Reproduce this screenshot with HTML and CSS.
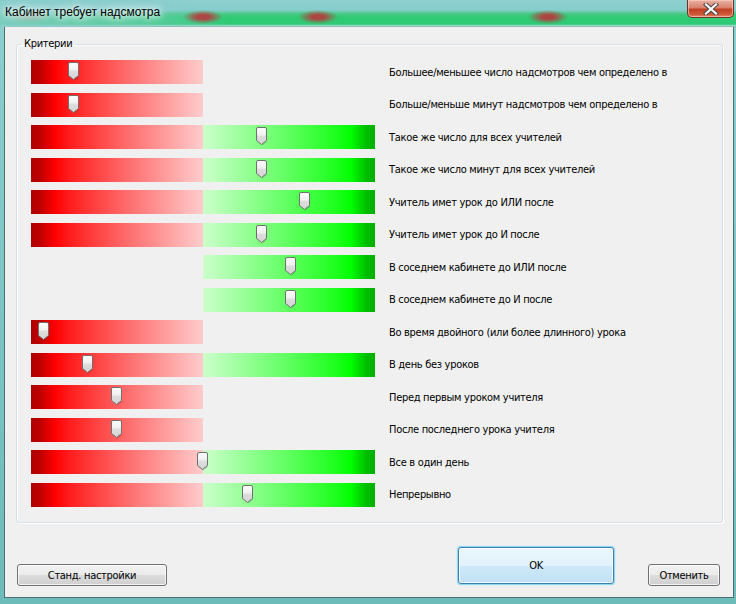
FILE: index.html
```html
<!DOCTYPE html>
<html lang="ru">
<head>
    <meta charset="UTF-8">
    <title>Кабинет требует надсмотра</title>
    <link rel="stylesheet" href="styles.css">
</head>
<body>
    <div class="window">
        <div class="titlebar">
            <span class="title">Кабинет требует надсмотра</span>
            <div class="close_btn">
                <svg width="16" height="12" viewBox="0 0 16 12">
                    <path d="M3 1.5 L13 10.5 M13 1.5 L3 10.5" stroke="#474747" stroke-width="4.2" stroke-linecap="square"/>
                    <path d="M3 1.5 L13 10.5 M13 1.5 L3 10.5" stroke="#ffffff" stroke-width="2.2" stroke-linecap="square"/>
                </svg>
            </div>
        </div>
        <div class="client">
            <fieldset class="group">
                <legend>Критерии</legend>
                <div class="rows">
                    <div class="row">
                        <div class="track"><div class="bar red"></div><div class="bar"></div><span class="thumb" style="left:37px"></span></div>
                        <span class="label">Большее/меньшее число надсмотров чем определено в</span>
                    </div>
                    <div class="row">
                        <div class="track"><div class="bar red"></div><div class="bar"></div><span class="thumb" style="left:37px"></span></div>
                        <span class="label">Больше/меньше минут надсмотров чем определено в</span>
                    </div>
                    <div class="row">
                        <div class="track"><div class="bar red"></div><div class="bar green"></div><span class="thumb" style="left:225px"></span></div>
                        <span class="label">Такое же число для всех учителей</span>
                    </div>
                    <div class="row">
                        <div class="track"><div class="bar red"></div><div class="bar green"></div><span class="thumb" style="left:225px"></span></div>
                        <span class="label">Такое же число минут для всех учителей</span>
                    </div>
                    <div class="row">
                        <div class="track"><div class="bar red"></div><div class="bar green"></div><span class="thumb" style="left:268px"></span></div>
                        <span class="label">Учитель имет урок до ИЛИ после</span>
                    </div>
                    <div class="row">
                        <div class="track"><div class="bar red"></div><div class="bar green"></div><span class="thumb" style="left:225px"></span></div>
                        <span class="label">Учитель имет урок до И после</span>
                    </div>
                    <div class="row">
                        <div class="track"><div class="bar"></div><div class="bar green"></div><span class="thumb" style="left:254px"></span></div>
                        <span class="label">В соседнем кабинете до ИЛИ после</span>
                    </div>
                    <div class="row">
                        <div class="track"><div class="bar"></div><div class="bar green"></div><span class="thumb" style="left:254px"></span></div>
                        <span class="label">В соседнем кабинете до И после</span>
                    </div>
                    <div class="row">
                        <div class="track"><div class="bar red"></div><div class="bar"></div><span class="thumb" style="left:7px"></span></div>
                        <span class="label">Во время двойного (или более длинного) урока</span>
                    </div>
                    <div class="row">
                        <div class="track"><div class="bar red"></div><div class="bar green"></div><span class="thumb" style="left:51px"></span></div>
                        <span class="label">В день без уроков</span>
                    </div>
                    <div class="row">
                        <div class="track"><div class="bar red"></div><div class="bar"></div><span class="thumb" style="left:80px"></span></div>
                        <span class="label">Перед первым уроком учителя</span>
                    </div>
                    <div class="row">
                        <div class="track"><div class="bar red"></div><div class="bar"></div><span class="thumb" style="left:80px"></span></div>
                        <span class="label">После последнего урока учителя</span>
                    </div>
                    <div class="row">
                        <div class="track"><div class="bar red"></div><div class="bar green"></div><span class="thumb" style="left:166px"></span></div>
                        <span class="label">Все в один день</span>
                    </div>
                    <div class="row">
                        <div class="track"><div class="bar red"></div><div class="bar green"></div><span class="thumb" style="left:211px"></span></div>
                        <span class="label">Непрерывно</span>
                    </div>
                </div>
            </fieldset>
            <div class="buttons">
                <button class="btn btn_defaults">Станд. настройки</button>
                <button class="btn btn_ok">OK</button>
                <button class="btn btn_cancel">Отменить</button>
            </div>
        </div>
    </div>
</body>
</html>
```

FILE: styles.css
```css
body {
    margin: 0;
    font-family: "DejaVu Sans Condensed", "DejaVu Sans", sans-serif;
    font-size: 11px;
    letter-spacing: -0.3px;
    color: #000;
}

.window {
    width: 736px;
    height: 604px;
    box-sizing: border-box;
    padding: 0 2px 6px 4px;
    display: flex;
    flex-direction: column;
    background: linear-gradient(to bottom, #8ccfce, #78c4c2 60%, #6cbcba);
}

/* glass title bar, blurred desktop behind it */
.titlebar {
    flex: 0 0 27px;
    margin: 0 -2px 0 -4px;
    display: flex;
    align-items: flex-start;
    background-color: #86cdcb;
    background-image:
        radial-gradient(ellipse 20px 7px at 203px 17px, rgba(185, 55, 60, 0.9) 30%, rgba(185, 55, 60, 0) 100%),
        radial-gradient(ellipse 20px 7px at 318px 17px, rgba(185, 55, 60, 0.9) 30%, rgba(185, 55, 60, 0) 100%),
        radial-gradient(ellipse 20px 7px at 548px 17px, rgba(185, 55, 60, 0.9) 30%, rgba(185, 55, 60, 0) 100%),
        radial-gradient(ellipse 22px 7px at 30px 16px, rgba(190, 90, 90, 0.3), rgba(190, 90, 90, 0) 100%),
        linear-gradient(to right, rgba(134, 205, 203, 0.85) 0, rgba(134, 205, 203, 0.35) 170px, rgba(134, 205, 203, 0) 230px),
        linear-gradient(to bottom, #8fd1d0 0, #86cdcb 10px, #45c882 14px, #2dcb72 18px, #30c977 24px, #5ccf95 25px, #c4ebe6 26px, #5a8a8a 27px);
}

.title {
    padding: 4px 0 0 5px;
    font-family: "Liberation Sans", sans-serif;
    font-size: 12px;
    letter-spacing: 0;
    line-height: 16px;
    color: #000;
    text-shadow: 0 0 5px #eefaf8, 0 0 9px #eefaf8, 0 0 12px #eefaf8;
}

.close_btn {
    margin-left: auto;
    margin-right: 2px;
    width: 47px;
    height: 18px;
    box-sizing: border-box;
    border: 1px solid #6b3328;
    border-top: none;
    border-radius: 0 0 5px 5px;
    display: flex;
    align-items: center;
    justify-content: center;
    background: linear-gradient(to bottom, #e9b1a3 0, #d9826d 45%, #c23f25 55%, #cf5a3a 85%, #e08a6c 100%);
    box-shadow: inset 0 0 0 1px rgba(255, 210, 200, 0.6);
}

.client {
    flex: 1;
    display: flex;
    flex-direction: column;
    background-color: #f0f0f0;
    border: 1px solid #4d6f72;
    border-top: none;
}

.group {
    margin: 10px 10px 0 11px;
    padding: 9px 14px 15px 14px;
    border: 1px solid #d5dfe5;
    border-radius: 3px;
    box-shadow: inset 1px 1px 0 #fff, 1px 1px 0 #fff;
}

.group legend {
    margin-left: -10px;
    padding: 0 3px;
    line-height: 14px;
}

.rows {
    display: flex;
    flex-direction: column;
    gap: 8.5px;
}

.row {
    display: flex;
    align-items: center;
    height: 24px;
}

.track {
    position: relative;
    display: flex;
    width: 344px;
    height: 24px;
}

.bar {
    width: 172px;
    height: 24px;
}

.bar.red {
    background: linear-gradient(to right, #b00000 0, #bd0000 5%, #ff0000 14%, #ff1c1c 22%, #ff6a6a 55%, #ffcccc 100%);
}

.bar.green {
    background: linear-gradient(to right, #ccffcc 0, #6aff6a 45%, #1cff1c 78%, #00ff00 86%, #00bd00 95%, #00b000 100%);
}

.thumb {
    position: absolute;
    top: 2px;
    width: 11px;
    height: 19px;
    background: url("data:image/svg+xml,%3Csvg xmlns='http://www.w3.org/2000/svg' width='11' height='19' viewBox='0 0 11 19'%3E%3Cdefs%3E%3ClinearGradient id='g' x1='0' y1='0' x2='0' y2='1'%3E%3Cstop offset='0' stop-color='%23fdfdfd'/%3E%3Cstop offset='0.45' stop-color='%23f0f0f0'/%3E%3Cstop offset='0.5' stop-color='%23dedede'/%3E%3Cstop offset='1' stop-color='%23d4d4d4'/%3E%3C/linearGradient%3E%3C/defs%3E%3Cpath d='M2 0.5H9Q10.5 0.5 10.5 2V13.5L5.5 17.5L0.5 13.5V2Q0.5 0.5 2 0.5Z' fill='url(%23g)' stroke='%23707070'/%3E%3Cpath d='M6 18.3L10.8 14.4' stroke='%23000' stroke-opacity='0.18'/%3E%3C/svg%3E") no-repeat;
}

.label {
    margin-left: 14px;
    white-space: nowrap;
}

.buttons {
    margin-top: auto;
    padding: 0 0 11px 0;
    display: flex;
    align-items: flex-end;
}

.btn {
    font-family: inherit;
    font-size: 11px;
    letter-spacing: inherit;
    color: #000;
    padding: 0;
    height: 22px;
    border: 1px solid #707070;
    border-radius: 3px;
    background: linear-gradient(to bottom, #f2f2f2 0, #ebebeb 50%, #dddddd 50%, #cfcfcf 100%);
    box-shadow: inset 0 0 0 1px rgba(255, 255, 255, 0.75);
}

.btn_defaults {
    width: 150px;
    margin-left: 12px;
}

.btn_ok {
    width: 156px;
    height: 37px;
    margin-left: auto;
    margin-bottom: 2px;
    border-color: #3c7fb1;
    background: linear-gradient(to bottom, #eaf6fd 0, #e2f2fb 50%, #cfe9f8 50%, #bfe1f4 100%);
    box-shadow: inset 0 0 0 1px rgba(255, 255, 255, 0.8), 0 0 1px 1px rgba(80, 200, 245, 0.7);
}

.btn_cancel {
    width: 72px;
    margin-left: 34px;
    margin-right: 13px;
}
```
